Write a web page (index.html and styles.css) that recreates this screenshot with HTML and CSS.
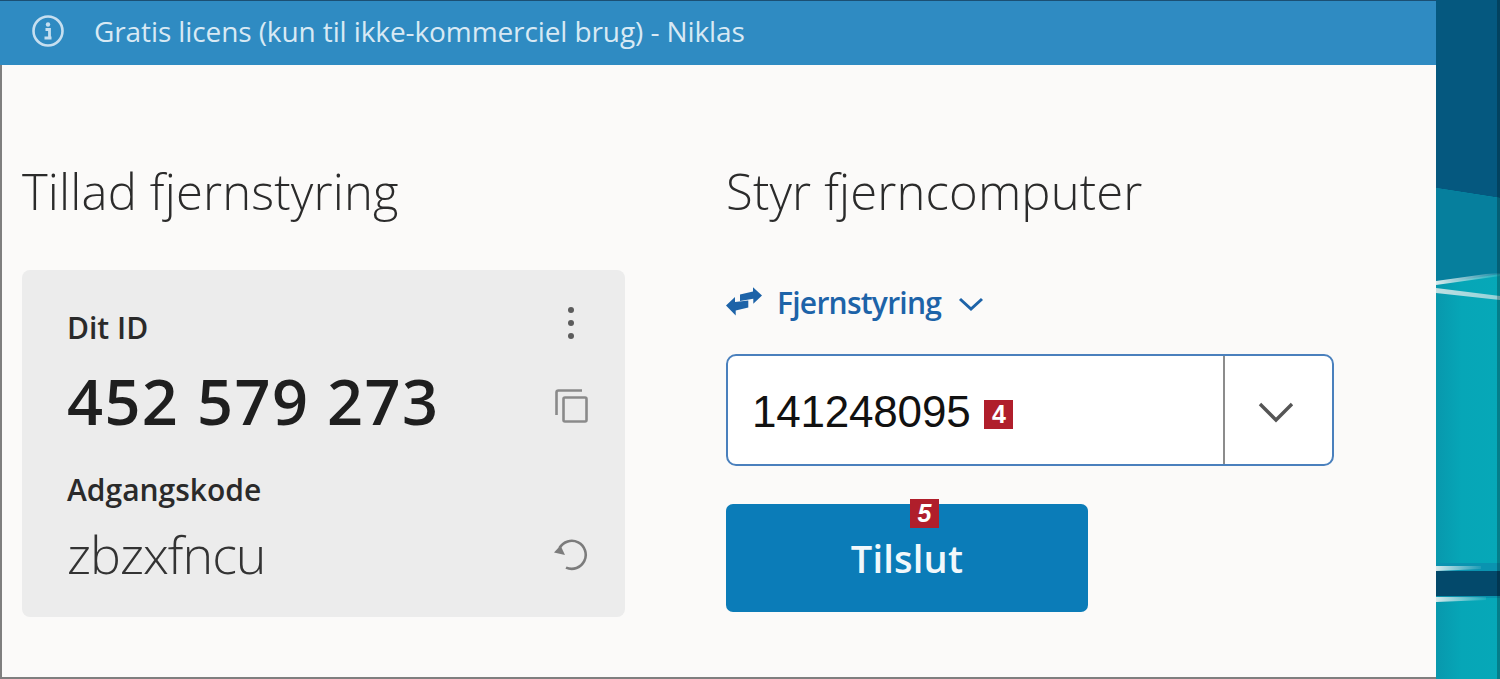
FILE: index.html
```html
<!DOCTYPE html>
<html lang="da">
<head>
<meta charset="utf-8">
<title>Fjernstyring</title>
<link rel="stylesheet" href="styles.css">
</head>
<body>
<div class="desktop">
  <main class="window">
    <header class="banner">
      <svg class="info-icon" viewBox="0 0 34 34" aria-hidden="true">
        <circle cx="17" cy="17" r="14.5" fill="none" stroke="#c6dff0" stroke-width="2.6"/>
        <circle cx="17" cy="10.5" r="2.2" fill="#c6dff0"/>
        <path d="M14.5 15.5h4v8M13.5 24h7" fill="none" stroke="#c6dff0" stroke-width="2.8"/>
      </svg>
      <span class="banner-text">Gratis licens (kun til ikke-kommerciel brug) - Niklas</span>
    </header>
    <div class="panels">
      <section class="panel-left">
        <h1 class="heading">Tillad fjernstyring</h1>
        <div class="card">
          <div class="card-row row-id-label">
            <span class="label">Dit ID</span>
            <svg class="icon-dots" viewBox="0 0 10 36" aria-hidden="true">
              <circle cx="5" cy="5" r="3" fill="#5c5c5c"/>
              <circle cx="5" cy="18" r="3" fill="#5c5c5c"/>
              <circle cx="5" cy="31" r="3" fill="#5c5c5c"/>
            </svg>
          </div>
          <div class="card-row row-id">
            <span class="id-number">452 579 273</span>
            <svg class="icon-copy" viewBox="0 0 34 36" aria-hidden="true">
              <rect x="8.5" y="9.500" width="23" height="24" rx="1.5" fill="none" stroke="#8a8a8a" stroke-width="2.6"/>
              <path d="M1.500 27V4.500q0-2 2-2H27" fill="none" stroke="#8a8a8a" stroke-width="2.6"/>
            </svg>
          </div>
          <span class="label label-code">Adgangskode</span>
          <div class="card-row row-code">
            <span class="code">zbzxfncu</span>
            <svg class="icon-refresh" viewBox="0 0 36 34" aria-hidden="true">
              <path d="M6.500 11A14 14 0 1 1 13 30.600" fill="none" stroke="#7c7c7c" stroke-width="2.6"/>
              <path d="M1 15.500L7.500 8.500 12 18z" fill="#7c7c7c"/>
            </svg>
          </div>
        </div>
      </section>
      <section class="panel-right">
        <h1 class="heading">Styr fjerncomputer</h1>
        <div class="mode">
          <svg class="icon-swap" viewBox="0 0 38 30" aria-hidden="true">
            <path d="M36 8.500L27 .3V4.500L14 7.500v6.500l13.300-2.300v5z" fill="#1d63a8"/>
            <path d="M0 18.500L9 10v5l13.300-1.600v7L9.700 23.500V28.500z" fill="#1d63a8"/>
          </svg>
          <span class="mode-text">Fjernstyring</span>
          <svg class="icon-mode-chev" viewBox="0 0 26 16" aria-hidden="true">
            <path d="M2 3l11 10L24 3" fill="none" stroke="#1d63a8" stroke-width="3"/>
          </svg>
        </div>
        <div class="combo">
          <div class="combo-value">
            <span class="combo-number">141248095</span>
            <span class="tag tag-inline">4</span>
          </div>
          <div class="combo-toggle">
            <svg class="icon-combo-chev" viewBox="0 0 36 22" aria-hidden="true">
              <path d="M2 3l16 16L34 3" fill="none" stroke="#555" stroke-width="3.4"/>
            </svg>
          </div>
        </div>
        <button class="connect" type="button">
          <span class="tag tag-over">5</span>
          Tilslut
        </button>
      </section>
    </div>
  </main>
  <aside class="wallpaper" aria-hidden="true">
    <svg class="wall-art" viewBox="0 0 64 679" preserveAspectRatio="none">
      <defs>
        <linearGradient id="fade" x1="0" y1="0" x2="1" y2="0">
          <stop offset="0" stop-color="#d6eaec"/>
          <stop offset="1" stop-color="#d6eaec" stop-opacity=".1"/>
        </linearGradient>
        <linearGradient id="fadeLong" x1="0" y1="0" x2="1" y2="0">
          <stop offset="0" stop-color="#bfe0e3"/>
          <stop offset="1" stop-color="#bfe0e3" stop-opacity=".75"/>
        </linearGradient>
        <linearGradient id="teal" x1="0" y1="0" x2="1" y2="0">
          <stop offset="0" stop-color="#0898ad"/>
          <stop offset=".4" stop-color="#06a6b7"/>
          <stop offset="1" stop-color="#06a8b8"/>
        </linearGradient>
      </defs>
      <rect width="64" height="679" fill="url(#teal)"/>
      <path d="M0 0H64V198L0 188z" fill="#05587f"/>
      <path d="M0 188L64 198V274L0 284z" fill="#067f9d"/>
      <path d="M0 281L50 274 64 273V276L0 285z" fill="url(#fade)"/>
      <path d="M0 288L64 296V300L0 293z" fill="url(#fadeLong)"/>
      <rect y="563" width="64" height="8" fill="#0a93b0"/>
      <path d="M0 566H45V569L0 571z" fill="url(#fade)"/>
      <rect y="571" width="64" height="25" fill="#03496b"/>
      <rect y="596" width="64" height="2" fill="#0893ad"/>
      <path d="M0 597H50V600L0 602z" fill="url(#fade)"/>
      <rect x="61" width="3" height="679" fill="#000" opacity=".25"/>
    </svg>
  </aside>
</div>
</body>
</html>
```

FILE: styles.css
```css
* { box-sizing: border-box; }

html, body {
  margin: 0;
  height: 100%;
  overflow: hidden;
}

body {
  font-family: "Open Sans", "Noto Sans", sans-serif;
  background: #06a8b8;
}

.desktop {
  display: flex;
  width: 1500px;
  height: 679px;
}

.window {
  width: 1436px;
  height: 679px;
  display: flex;
  flex-direction: column;
  background: #fbfaf9;
  border-left: 2px solid #7f7f7f;
  border-bottom: 2px solid #7f7f7f;
}

.banner {
  height: 65px;
  flex: none;
  display: flex;
  align-items: center;
  gap: 29px;
  padding: 0 0 4px 31px;
  background: #2f8bc2;
  border-top: 1px solid #1b4f73;
  margin-left: -2px;
}

.info-icon {
  width: 34px;
  height: 34px;
  flex: none;
}

.banner-text {
  font-size: 28px;
  letter-spacing: -0.1px;
  color: #d8e9f4;
}

.panels {
  flex: 1;
  display: grid;
  grid-template-columns: 704px 1fr;
  padding: 91px 0 0 20px;
}

.heading {
  margin: 0;
  height: 114px;
  font-size: 49px;
  line-height: 70px;
  font-weight: 300;
  letter-spacing: 0.15px;
  color: #2b2b2b;
}

.card {
  width: 603px;
  height: 347px;
  padding: 36px 36px 0 45px;
  display: flex;
  flex-direction: column;
  background: #ececec;
  border-radius: 8px;
}

.card-row {
  display: flex;
  justify-content: space-between;
  align-items: center;
}

.row-id-label { height: 44px; }

.label {
  font-size: 30px;
  line-height: 44px;
  font-weight: 600;
  letter-spacing: 0;
  color: #2a2a2a;
}

.label-code { margin-top: 29px; }

.icon-dots {
  width: 10px;
  height: 36px;
  margin-right: 13px;
  margin-top: -10px;
}

.row-id {
  height: 76px;
  margin-top: 13px;
}

.id-number {
  font-size: 63px;
  font-weight: 600;
  line-height: 76px;
  letter-spacing: 1.4px;
  color: #1f1f1f;
}

.icon-copy {
  width: 34px;
  height: 36px;
  margin-top: 10px;
}

.row-code {
  height: 66px;
  margin-top: 9px;
}

.code {
  font-size: 52px;
  line-height: 66px;
  font-weight: 300;
  letter-spacing: -1px;
  color: #333;
}

.icon-refresh {
  width: 36px;
  height: 34px;
}

.mode {
  display: flex;
  align-items: center;
  height: 40px;
  margin-top: 12px;
  color: #1d63a8;
}

.icon-swap {
  width: 38px;
  height: 30px;
  flex: none;
}

.mode-text {
  margin-left: 13px;
  font-size: 30px;
  font-weight: 600;
  letter-spacing: -0.75px;
}

.icon-mode-chev {
  width: 26px;
  height: 16px;
  margin-left: 17px;
  margin-top: 3px;
}

.combo {
  width: 608px;
  height: 112px;
  margin-top: 32px;
  display: flex;
  background: #fff;
  border: 2.5px solid #4a80bd;
  border-radius: 10px;
}

.combo-value {
  flex: 1;
  display: flex;
  align-items: center;
  gap: 14px;
  padding: 3px 0 0 24px;
}

.combo-number {
  font-family: "Liberation Sans", Arial, sans-serif;
  font-size: 44px;
  letter-spacing: -0.2px;
  color: #111;
}

.combo-toggle {
  width: 109px;
  display: flex;
  align-items: center;
  justify-content: center;
  padding: 3px 6px 0 0;
  border-left: 2px solid #8c8c8c;
}

.icon-combo-chev {
  width: 36px;
  height: 22px;
}

.tag {
  display: flex;
  align-items: center;
  justify-content: center;
  width: 29px;
  height: 29px;
  background: #b01e2b;
  color: #fff;
  font-family: "Liberation Sans", Arial, sans-serif;
  font-size: 25px;
  font-weight: 700;
  font-style: italic;
}

.tag-inline {
  font-style: normal;
  margin-top: 5px;
}

.connect {
  position: relative;
  display: block;
  width: 362px;
  height: 108px;
  margin-top: 38px;
  padding: 0;
  background: #0b7cb8;
  border: 0;
  border-radius: 7px;
  color: #f2f8fb;
  font-family: "Open Sans", "Noto Sans", sans-serif;
  font-size: 38px;
  font-weight: 600;
  letter-spacing: 0.2px;
}

.tag-over {
  position: absolute;
  top: -5px;
  left: 184px;
}

.wallpaper {
  flex: 1;
  height: 679px;
}

.wall-art {
  display: block;
  width: 100%;
  height: 100%;
}
```
